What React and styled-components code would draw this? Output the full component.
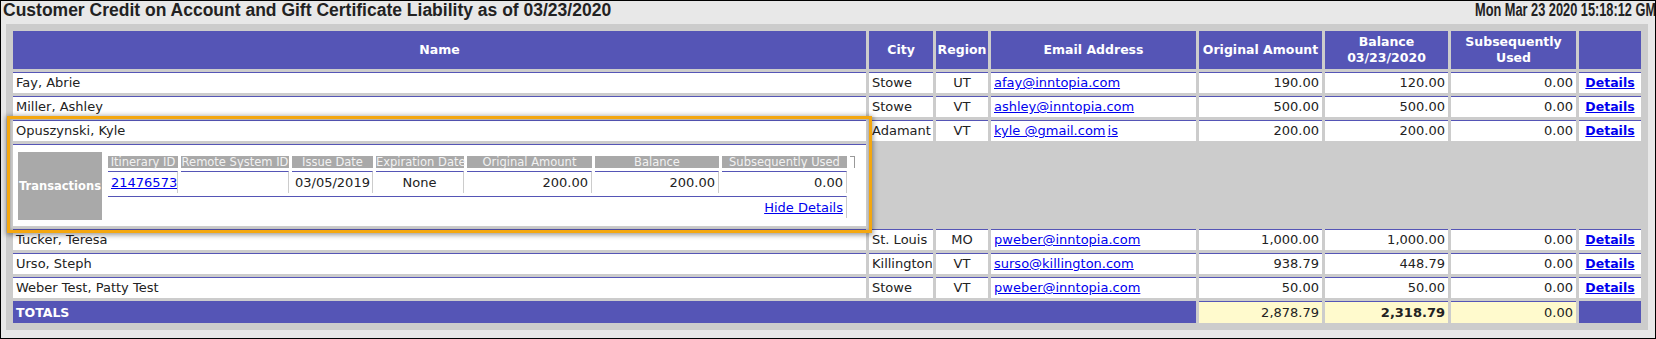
import React from 'react';
import styled, { createGlobalStyle } from 'styled-components';

const PURPLE = '#5555b6';
const LINK = '#0000ee';

const GlobalStyle = createGlobalStyle`
  html, body {
    margin: 0;
    padding: 0;
    background: #e8e8e8;
  }
  body {
    font-family: "DejaVu Sans", Verdana, sans-serif;
  }
`;

const Frame = styled.div`
  position: relative;
  box-sizing: border-box;
  width: 1656px;
  height: 339px;
  border: 1px solid #000;
  background: #e8e8e8;
  overflow: hidden;
`;

const TitleBar = styled.div`
  display: flex;
  height: 23px;
  padding-left: 2px;
  font-family: "Liberation Sans", Arial, sans-serif;
  font-weight: bold;
  font-size: 17.5px;
  line-height: 19px;
  color: #222;
  white-space: nowrap;
`;

const Title = styled.div`
  flex: none;
`;

const Stamp = styled.div`
  margin-left: auto;
  width: 180px;
  overflow: hidden;
`;

const StampText = styled.span`
  display: inline-block;
  transform: scaleX(0.73);
  transform-origin: left center;
`;

const Report = styled.div`
  margin: 0 7px 0 5px;
  padding: 4px;
  background: #ccc;
`;

const Grid = styled.table`
  table-layout: fixed;
  width: 1634px;
  border-collapse: separate;
  border-spacing: 3px;
  font-size: 13px;
  color: #222;
`;

const Col = styled.col`
  width: ${p => p.$w}px;
`;

const Head = styled.th`
  height: 38px;
  box-sizing: border-box;
  padding: 0 1px;
  background: ${PURPLE};
  color: #fff;
  font-size: 12.5px;
  line-height: 16px;
  font-weight: bold;
  text-align: center;
  white-space: nowrap;
`;

const Cell = styled.td`
  padding: 0 3px;
  border-top: 1px solid ${PURPLE};
  background: ${p => (p.$total ? '#fffacd' : '#fff')};
  text-align: ${p => p.$align || 'left'};
  font-weight: ${p => (p.$bold ? 'bold' : 'normal')};
  line-height: 20px;
  white-space: nowrap;
  overflow: hidden;
`;

const TotalLabel = styled.td`
  padding: 0 3px;
  background: ${PURPLE};
  color: #fff;
  font-weight: bold;
  font-size: 12.5px;
  line-height: 21px;
  border-top: 1px solid ${PURPLE};
`;

const Link = styled.a`
  color: ${LINK};
  text-decoration: underline;
  font-weight: ${p => (p.$bold ? 'bold' : 'normal')};
  font-size: ${p => (p.$bold ? '12.5px' : '13px')};
  & + & {
    margin-left: 2px;
  }
`;

const DetailCell = styled.td`
  padding: 7px 5px 5px;
  border-top: 1px solid ${PURPLE};
  background: #fff;
  vertical-align: top;
`;

const Panel = styled.div`
  display: flex;
  align-items: flex-start;
  gap: 3px;
`;

const Badge = styled.div`
  flex: none;
  width: 84px;
  height: 68px;
  display: flex;
  align-items: center;
  justify-content: center;
  background: #a9a9a9;
  color: #fff;
  font-weight: bold;
  font-size: 11.5px;
  white-space: nowrap;
`;

const SubTable = styled.table`
  margin-top: 1px;
  table-layout: fixed;
  width: 753px;
  border-collapse: separate;
  border-spacing: 3px;
  font-size: 13px;
  color: #222;
`;

const SubHead = styled.th`
  height: 12px;
  padding: 0;
  background: #a9a9a9;
  color: #f2f2f2;
  font-weight: normal;
  font-size: 11.5px;
  line-height: 12px;
  text-align: center;
  white-space: nowrap;
`;

const SubMark = styled.th`
  height: 12px;
  box-sizing: border-box;
  padding: 0;
  border-top: 1px solid #999;
  border-right: 1px solid #999;
`;

const SubCell = styled.td`
  padding: 0 3px;
  border-top: 1px solid ${PURPLE};
  border-right: 1px solid #ccc;
  text-align: ${p => p.$align || 'left'};
  line-height: 21px;
  white-space: nowrap;
  overflow: hidden;
`;

const Highlight = styled.div`
  position: absolute;
  left: 6px;
  top: 115px;
  width: 865px;
  height: 117px;
  box-sizing: border-box;
  border: 3px solid #f4a70f;
  box-shadow: 0 1px 5px 1px rgba(0, 0, 0, 0.4), inset 0 0 3px rgba(0, 0, 0, 0.3);
  pointer-events: none;
`;

const widths = [853, 64, 52, 205, 123, 123, 125, 62];
const subWidths = [70, 108, 81, 88, 125, 124, 125, 5];

const customers = [
  { name: 'Fay, Abrie', city: 'Stowe', region: 'UT', email: 'afay@inntopia.com', orig: '190.00', bal: '120.00', used: '0.00' },
  { name: 'Miller, Ashley', city: 'Stowe', region: 'VT', email: 'ashley@inntopia.com', orig: '500.00', bal: '500.00', used: '0.00' },
  { name: 'Opuszynski, Kyle', city: 'Adamant', region: 'VT', email: 'kyle @gmail.com', extra: 'is', orig: '200.00', bal: '200.00', used: '0.00', open: true },
  { name: 'Tucker, Teresa', city: 'St. Louis', region: 'MO', email: 'pweber@inntopia.com', orig: '1,000.00', bal: '1,000.00', used: '0.00' },
  { name: 'Urso, Steph', city: 'Killington', region: 'VT', email: 'surso@killington.com', orig: '938.79', bal: '448.79', used: '0.00' },
  { name: 'Weber Test, Patty Test', city: 'Stowe', region: 'VT', email: 'pweber@inntopia.com', orig: '50.00', bal: '50.00', used: '0.00' },
];

function Transactions() {
  return (
    <Panel>
      <Badge>Transactions</Badge>
      <SubTable>
        <colgroup>
          {subWidths.map((w, i) => <Col key={i} $w={w} />)}
        </colgroup>
        <tbody>
          <tr>
            <SubHead>Itinerary ID</SubHead>
            <SubHead>Remote System ID</SubHead>
            <SubHead>Issue Date</SubHead>
            <SubHead>Expiration Date</SubHead>
            <SubHead>Original Amount</SubHead>
            <SubHead>Balance</SubHead>
            <SubHead>Subsequently Used</SubHead>
            <SubMark />
          </tr>
          <tr>
            <SubCell><Link href="#">21476573</Link></SubCell>
            <SubCell />
            <SubCell $align="center">03/05/2019</SubCell>
            <SubCell $align="center">None</SubCell>
            <SubCell $align="right">200.00</SubCell>
            <SubCell $align="right">200.00</SubCell>
            <SubCell $align="right">0.00</SubCell>
            <td />
          </tr>
          <tr>
            <SubCell colSpan={7} $align="right"><Link href="#">Hide Details</Link></SubCell>
            <td />
          </tr>
        </tbody>
      </SubTable>
    </Panel>
  );
}

function CustomerRow({ c }) {
  return (
    <tr>
      <Cell>{c.name}</Cell>
      <Cell>{c.city}</Cell>
      <Cell $align="center">{c.region}</Cell>
      <Cell>
        <Link href="#">{c.email}</Link>
        {c.extra && <Link href="#">{c.extra}</Link>}
      </Cell>
      <Cell $align="right">{c.orig}</Cell>
      <Cell $align="right">{c.bal}</Cell>
      <Cell $align="right">{c.used}</Cell>
      <Cell $align="center"><Link href="#" $bold>Details</Link></Cell>
    </tr>
  );
}

export default function App() {
  return (
    <>
      <GlobalStyle />
      <Frame>
        <TitleBar>
          <Title>Customer Credit on Account and Gift Certificate Liability as of 03/23/2020</Title>
          <Stamp>
            <StampText>Mon Mar 23 2020 15:18:12 GMT-0400 (Eastern Daylight Time)</StampText>
          </Stamp>
        </TitleBar>
        <Report>
          <Grid>
            <colgroup>
              {widths.map((w, i) => <Col key={i} $w={w} />)}
            </colgroup>
            <thead>
              <tr>
                <Head>Name</Head>
                <Head>City</Head>
                <Head>Region</Head>
                <Head>Email Address</Head>
                <Head>Original Amount</Head>
                <Head>Balance<br />03/23/2020</Head>
                <Head>Subsequently<br />Used</Head>
                <Head />
              </tr>
            </thead>
            <tbody>
              {customers.map(c => (
                <React.Fragment key={c.name}>
                  <CustomerRow c={c} />
                  {c.open && (
                    <tr>
                      <DetailCell><Transactions /></DetailCell>
                      <td colSpan={7} />
                    </tr>
                  )}
                </React.Fragment>
              ))}
              <tr>
                <TotalLabel colSpan={4}>TOTALS</TotalLabel>
                <Cell $total $align="right">2,878.79</Cell>
                <Cell $total $bold $align="right">2,318.79</Cell>
                <Cell $total $align="right">0.00</Cell>
                <TotalLabel />
              </tr>
            </tbody>
          </Grid>
        </Report>
        <Highlight />
      </Frame>
    </>
  );
}
